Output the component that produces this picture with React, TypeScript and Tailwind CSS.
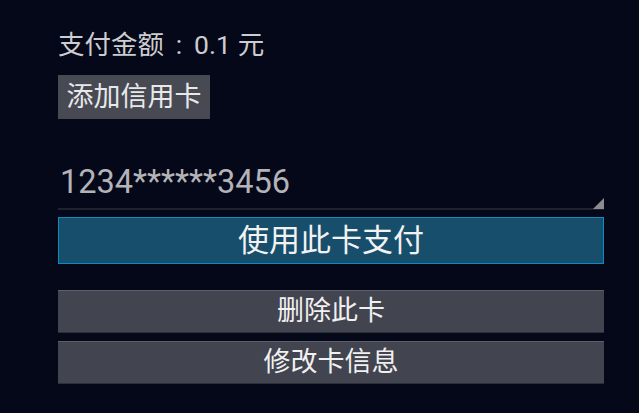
export default function App() {
  const font = { fontFamily: 'Roboto, "Noto Sans CJK SC", sans-serif' };
  return (
    <div
      className="w-[639px] h-[413px] bg-[#050818] pl-[58px] pt-[30px] overflow-hidden"
      style={font}
    >
      <div className="w-[546px] flex flex-col">
        {/* amount */}
        <div className="h-[31px] flex items-center text-[26.5px] text-[#cdcdd0] leading-none">
          <span>支付金额</span>
          <span className="w-[30px] flex justify-center">:</span>
          <span>0.1</span>
          <span className="ml-[7px]">元</span>
        </div>

        {/* add card */}
        <div className="mt-[14px]">
          <button className="h-[44px] w-[152px] bg-[#474953] text-[#e8e8ea] text-[27px] leading-none flex items-center justify-center">
            添加信用卡
          </button>
        </div>

        {/* card field */}
        <div className="mt-[42px] relative h-[49px] border-b-2 border-[#1f2130]">
          <div className="pl-[2px] pt-[1px] text-[32.5px] leading-[40px] text-[#b3b3b8]">
            1234******3456
          </div>
          <svg
            className="absolute right-0 bottom-[-1px]"
            width="11"
            height="11"
            viewBox="0 0 11 11"
          >
            <polygon points="11,0 11,11 0,11" fill="#8c8c90" />
          </svg>
        </div>

        {/* pay */}
        <button className="mt-[7px] h-[47px] w-full bg-[#174e6c] border border-[#0d8cbd] text-[#f2f2f2] text-[31px] leading-none flex items-center justify-center">
          使用此卡支付
        </button>

        <button className="mt-[26px] h-[43px] w-full bg-[#42444f] border-t border-t-[#5c5e68] border-b border-b-[#2c2e38] text-[#f0f0f0] text-[27px] leading-none flex items-center justify-center">
          删除此卡
        </button>

        <button className="mt-[8px] h-[43px] w-full bg-[#42444f] border-t border-t-[#5c5e68] border-b border-b-[#2c2e38] text-[#f0f0f0] text-[27px] leading-none flex items-center justify-center">
          修改卡信息
        </button>
      </div>
    </div>
  );
}
